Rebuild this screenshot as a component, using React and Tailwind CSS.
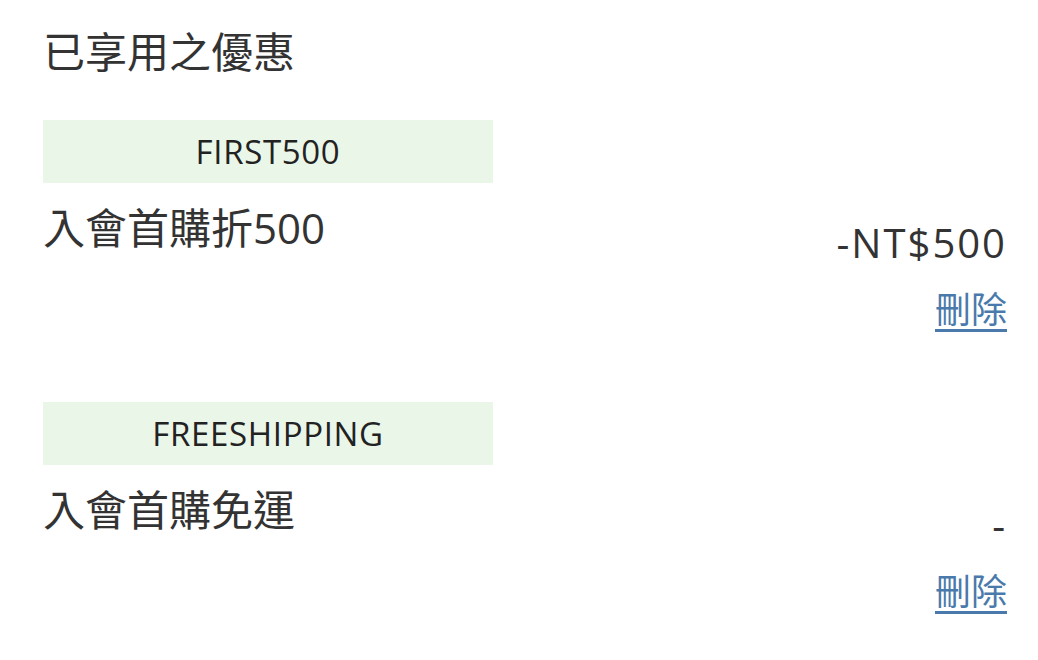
import React from 'react';

const coupons = [
  { code: 'FIRST500', name: '入會首購折500', amount: '-NT$500' },
  { code: 'FREESHIPPING', name: '入會首購免運', amount: '-' },
];

const font = "font-['Open_Sans','Noto_Sans_CJK_TC',sans-serif]";

function CouponItem({ coupon }) {
  return (
    <div className="mb-[67px]">
      <div className="w-[450px] h-[63px] bg-[#eaf6e8] flex items-center justify-center text-[33px] tracking-[0.02em] text-[#222]">
        {coupon.code}
      </div>
      <div className="flex justify-between">
        <div className="mt-[20px] text-[42px] leading-[50px] text-[#333]">{coupon.name}</div>
        <div className="flex flex-col items-end">
          <div className="mt-[35px] text-[40px] leading-[50px] tracking-[0.05em] text-[#333]">{coupon.amount}</div>
          <a href="#" className="mt-[17px] text-[36px] leading-[50px] text-[#4a7aab] underline underline-offset-[6px]">
            刪除
          </a>
        </div>
      </div>
    </div>
  );
}

export default function App() {
  return (
    <div className={`${font} bg-white min-h-[660px] pl-[43px] pr-[31px]`}>
      <h2 className="pt-[22px] text-[42px] leading-[60px] text-[#333] mb-[38px]">已享用之優惠</h2>
      {coupons.map((c) => (
        <CouponItem key={c.code} coupon={c} />
      ))}
    </div>
  );
}
